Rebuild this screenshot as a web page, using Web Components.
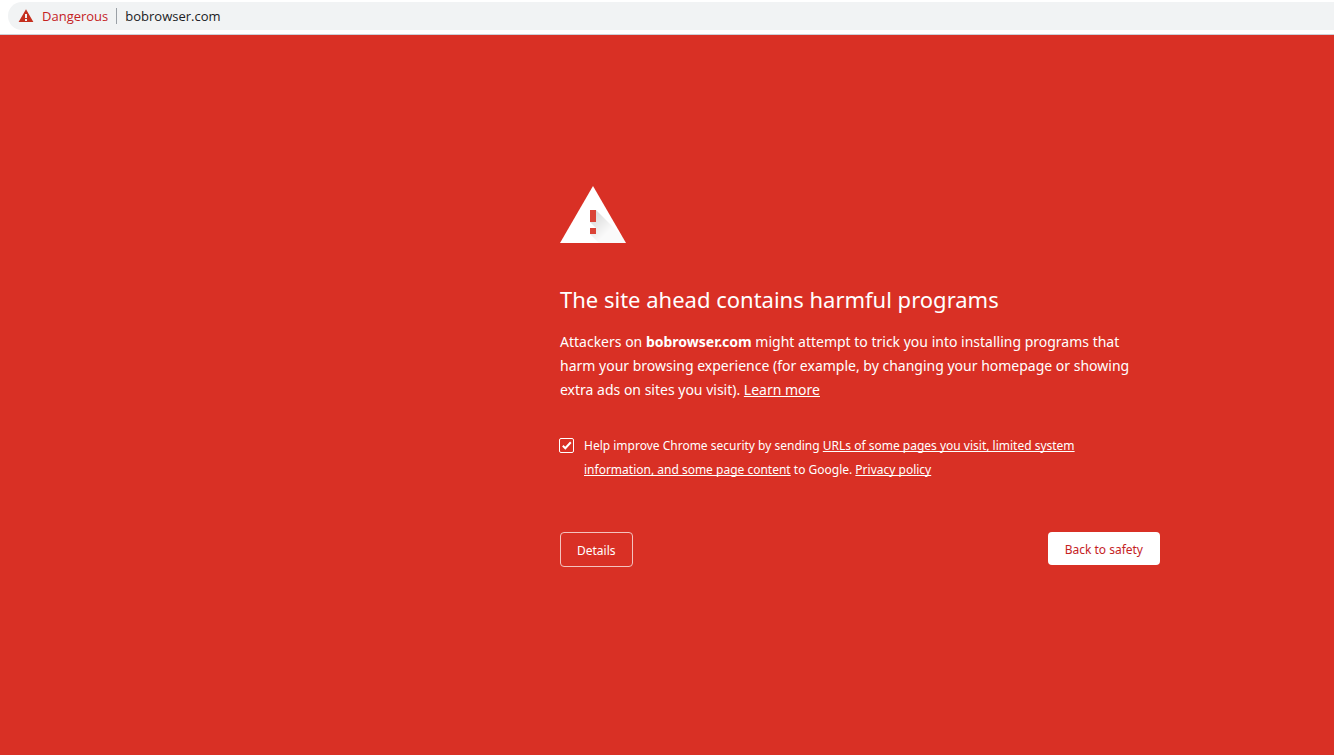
<!DOCTYPE html>
<html lang="en">
<head>
<meta charset="utf-8">
<title>Security error</title>
<style>
  html, body { margin: 0; min-height: 100%; background: #d93025; }
  body { font-family: "Noto Sans", "Open Sans", sans-serif; color: #fff; }
</style>
</head>
<body>
<address-bar status="Dangerous" host="bobrowser.com"></address-bar>
<warning-page>
  <warning-icon slot="icon"></warning-icon>
  <span slot="title">The site ahead contains harmful programs</span>
  <warning-text slot="message">Attackers on <strong>bobrowser.com</strong> might attempt to trick you into installing programs that harm your browsing experience (for example, by changing your homepage or showing extra ads on sites you visit). <text-link to="#learn">Learn more</text-link></warning-text>
  <report-option slot="option"></report-option>
  <action-button slot="details">Details</action-button>
  <action-button slot="primary" primary>Back to safety</action-button>
</warning-page>

<script>
class Base extends HTMLElement {
  constructor() {
    super();
    this.attachShadow({ mode: 'open' });
  }
  connectedCallback() {
    if (!this.shadowRoot.firstChild) this.shadowRoot.innerHTML = this.view();
  }
}

customElements.define('address-bar', class extends Base {
  view() {
    return `
    <style>
      :host { display: block; padding: 2px 0 4px 8px; background: #fff; border-bottom: 1px solid #ccd0d7; }
      .pill { display: flex; align-items: center; gap: 8px; height: 28px; padding-left: 10px; background: #f1f3f4;
              border-radius: 14px 0 0 14px; font-family: "Open Sans", "Noto Sans", sans-serif; font-size: 13px; line-height: 20px; }
      svg { width: 16px; height: 16px; flex: none; }
      .status { color: #c5221f; }
      .host { color: #202124; }
      .rule { width: 1px; height: 16px; background: #9aa0a6; }
    </style>
    <div class="pill">
      <svg viewBox="0 0 16 16" aria-hidden="true"><path fill="#c5301f" fill-rule="evenodd" d="M8 1.2 15.4 14H.6ZM7 6v4h2V6ZM7 11v2h2V11Z"/></svg>
      <span class="status">${this.getAttribute('status')}</span>
      <span class="rule"></span>
      <span class="host">${this.getAttribute('host')}</span>
    </div>`;
  }
});

customElements.define('warning-icon', class extends Base {
  view() {
    return `
    <style>:host { display: block; } svg { display: block; width: 66px; height: 57px; }</style>
    <svg viewBox="0 0 66 57" role="img" aria-label="Warning">
      <defs><linearGradient id="g" gradientUnits="userSpaceOnUse" x1="33" y1="33" x2="47" y2="47">
        <stop offset="0" stop-color="#000" stop-opacity=".13"/><stop offset="1" stop-color="#000" stop-opacity=".02"/>
      </linearGradient></defs>
      <path fill="#fff" d="M33 0 66 57H0Z"/>
      <path fill="url(#g)" d="M36 24 62 50 66 57H39L30 48H36V42L30 36H36Z"/>
      <path fill="#db4437" d="M30 24h6v12h-6zM30 42h6v6h-6z"/>
    </svg>`;
  }
});

customElements.define('text-link', class extends Base {
  view() {
    return `
    <style>
      :host { display: inline; }
      a { color: inherit; text-decoration: underline; text-decoration-thickness: 1px; text-underline-offset: 1px; text-decoration-skip-ink: none; }
    </style><a href="${this.getAttribute('to')}"><slot></slot></a>`;
  }
});

customElements.define('warning-text', class extends Base {
  view() {
    return `
    <style>
      :host { display: block; }
      p { margin: 0; max-width: 584px; font-size: 14px; line-height: 24px; }
      ::slotted(strong) { font-weight: 700; }
    </style><p><slot></slot></p>`;
  }
});

customElements.define('report-option', class extends Base {
  view() {
    return `
    <style>
      :host { display: flex; align-items: flex-start; gap: 10px; font-size: 12px; line-height: 24px; }
      input { appearance: none; box-sizing: border-box; flex: none; width: 15px; height: 15px; margin: 4px 0 0 -1px;
              border: 1px solid #fff; border-radius: 2px; }
      input:checked {
        background: center / 13px 13px no-repeat url("data:image/svg+xml,%3Csvg xmlns='http://www.w3.org/2000/svg' viewBox='0 0 13 13'%3E%3Cpath d='M2.8 6.8 5.3 9.2 10.8 3.2' fill='none' stroke='white' stroke-width='2'/%3E%3C/svg%3E");
      }
      label { max-width: 540px; }
    </style>
    <input type="checkbox" id="report" checked>
    <label for="report">Help improve Chrome security by sending <text-link to="#pages">URLs of some pages you visit, limited system information, and some page content</text-link> to Google. <text-link to="#privacy">Privacy policy</text-link></label>`;
  }
});

customElements.define('action-button', class extends Base {
  view() {
    return `
    <style>
      :host { display: block; }
      button { display: block; margin: 0; font: inherit; font-size: 12px; line-height: 17px; padding: 9px 16px 7px;
               border-radius: 4px; cursor: pointer; color: #fff; background: transparent; border: 1px solid #f4c2be; }
      :host([primary]) button { padding-inline: 17px; color: #c5221f; background: #fff; border: 0; }
    </style><button type="button"><slot></slot></button>`;
  }
});

customElements.define('warning-page', class extends Base {
  view() {
    return `
    <style>
      :host { display: grid; grid-template-columns: 560fr minmax(0, 600fr) 174fr; padding: 151px 0 48px; background: #d93025; }
      main { grid-column: 2; }
      h1 { margin: 40px 0 14px; font-size: 22px; line-height: 33px; font-weight: 400; }
      .option { margin-top: 32px; }
      .actions { display: flex; justify-content: space-between; align-items: flex-start; margin-top: 50px; }
    </style>
    <main>
      <slot name="icon"></slot>
      <h1><slot name="title"></slot></h1>
      <slot name="message"></slot>
      <div class="option"><slot name="option"></slot></div>
      <div class="actions"><slot name="details"></slot><slot name="primary"></slot></div>
    </main>`;
  }
});
</script>
</body>
</html>
